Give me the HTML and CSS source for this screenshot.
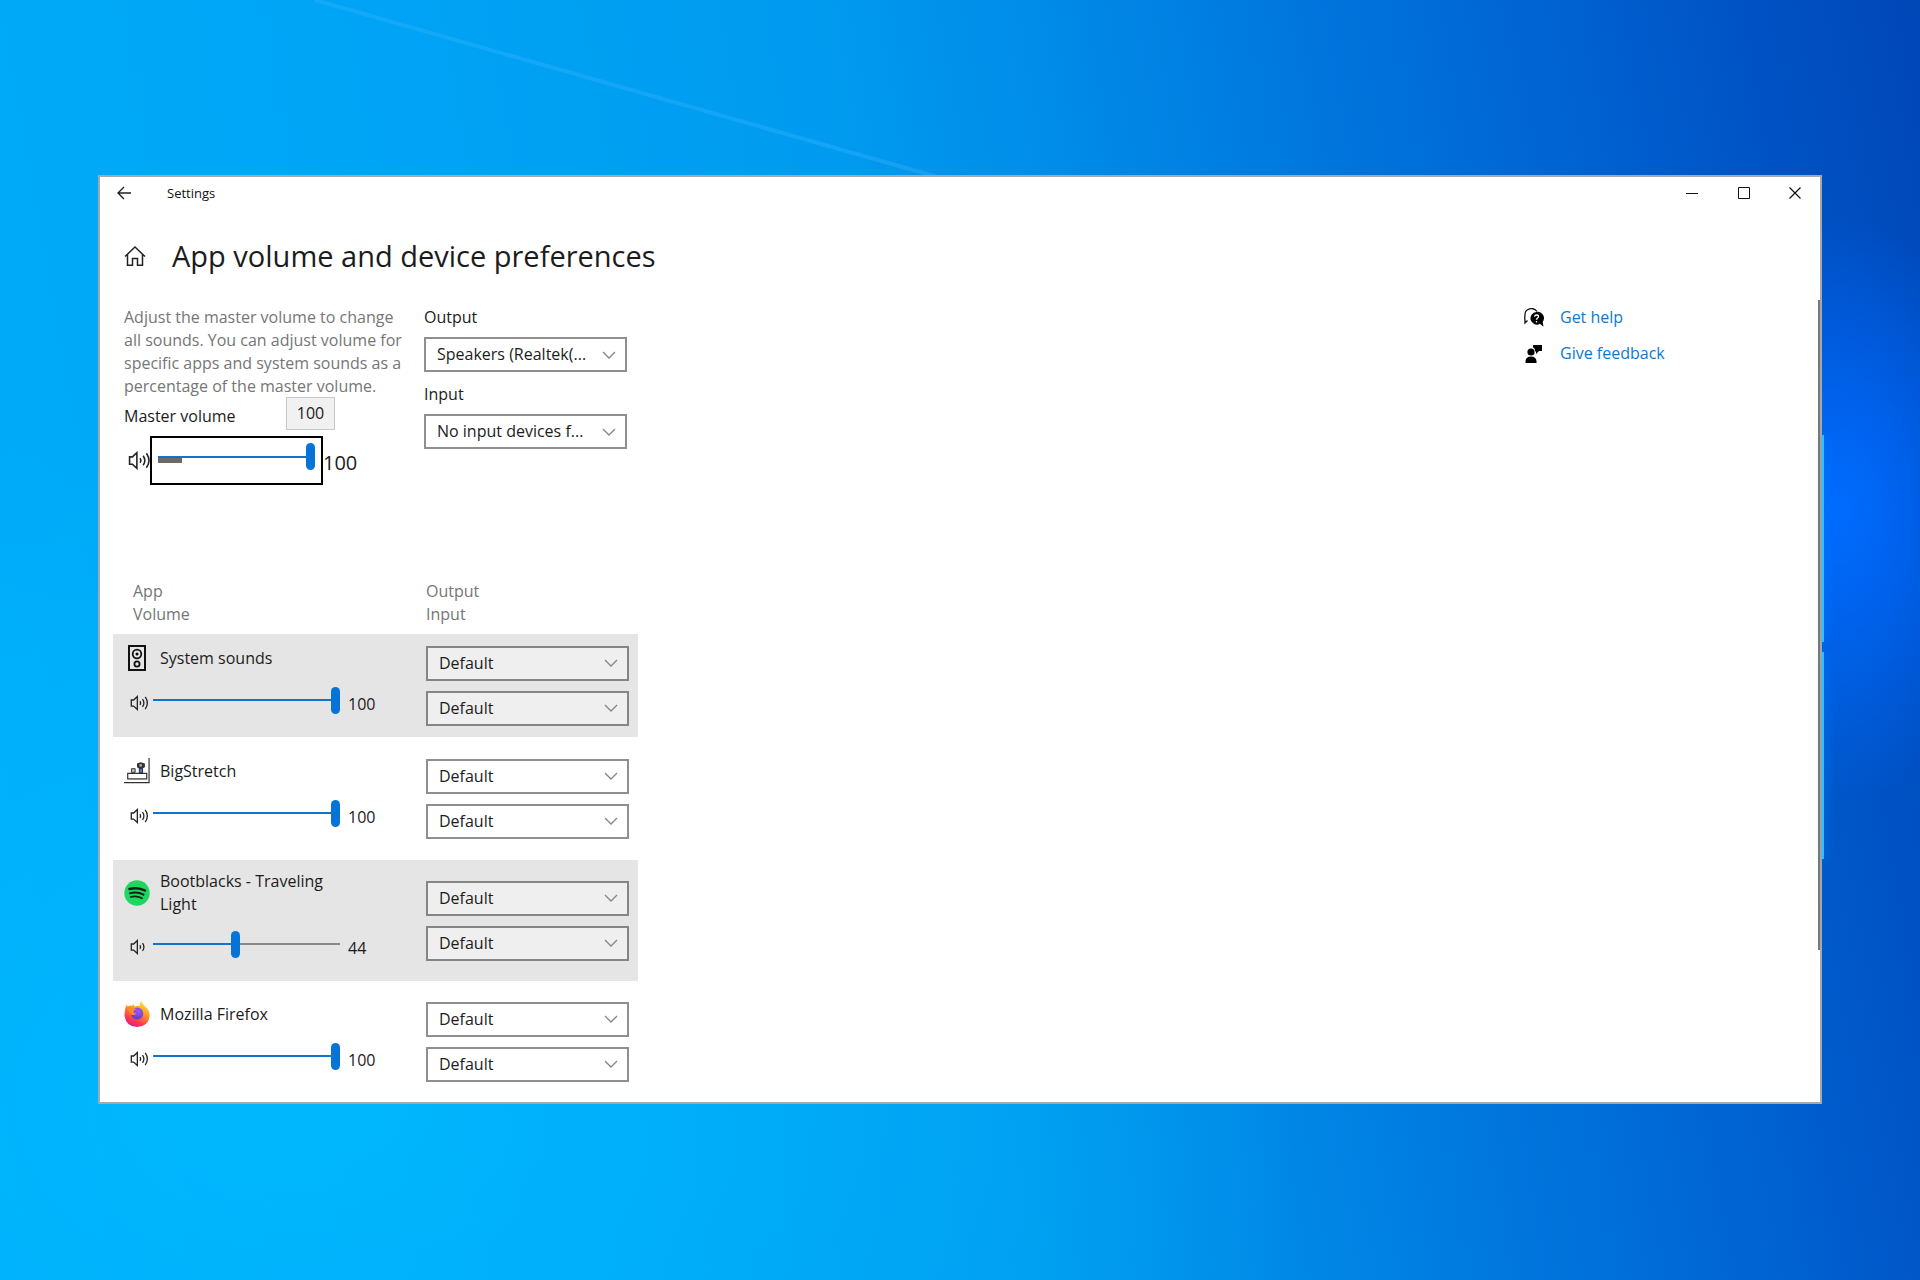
FILE: index.html
```html
<!DOCTYPE html>
<html lang="en">
<head>
<meta charset="utf-8">
<title>Settings</title>
<link rel="stylesheet" href="styles.css">
</head>
<body>
<svg class="defs" aria-hidden="true">
  <symbol id="chevron" viewBox="0 0 14 8"><path d="M1 1l6 6 6-6" fill="none" stroke="#858585" stroke-width="1.3"/></symbol>
  <symbol id="vol-high" viewBox="0 0 22 18"><g fill="none" stroke="#222" stroke-width="1.5"><path d="M1.500 5.500v7h2.700l4.300 4V1.500L4.200 5.500z"/><path d="M11.500 6.800q1.500 2.200 0 4.400M14.500 4.400q3.200 4.600 0 9.200M17.600 2q5 7 0 14"/></g></symbol>
  <symbol id="vol-mid" viewBox="0 0 22 18"><g fill="none" stroke="#222" stroke-width="1.5"><path d="M1.500 5.500v7h2.700l4.300 4V1.500L4.200 5.500z"/><path d="M11.500 6.800q1.500 2.200 0 4.400M14.500 4.400q3.200 4.600 0 9.200"/></g></symbol>
</svg>

<div class="wallpaper" aria-hidden="true">
  <svg class="beam" viewBox="0 0 1920 1280" preserveAspectRatio="none">
    <path d="M315 0L1180 246" stroke="#36b4ff" stroke-opacity=".35" stroke-width="4"/>
  </svg>
</div>

<main class="window">
  <i class="pane pane-top"></i><i class="pane pane-bottom"></i>
  <header class="titlebar">
    <button class="back" aria-label="Back"><svg width="14" height="14" viewBox="0 0 14 14"><path d="M14 7H1M7 1L1 7l6 6" fill="none" stroke="#222" stroke-width="1.400"/></svg></button>
    <span class="title">Settings</span>
    <button class="caption" aria-label="Minimize"><svg width="12" height="12" viewBox="0 0 12 12"><path d="M0 6.500h12" stroke="#111"/></svg></button>
    <button class="caption" aria-label="Maximize"><svg width="12" height="12" viewBox="0 0 12 12"><path d="M.5.5h11v11H.5z" fill="none" stroke="#111"/></svg></button>
    <button class="caption" aria-label="Close"><svg width="12" height="12" viewBox="0 0 12 12"><path d="M.5.5l11 11M11.500.5l-11 11" stroke="#111" stroke-width="1.200"/></svg></button>
  </header>

  <div class="heading">
    <svg width="22" height="22" viewBox="0 0 22 22"><path d="M1 11.500L11 2l10 9.500M3.500 9.500V20.300H8.500V13.500h5v6.800h5V9.500" fill="none" stroke="#222" stroke-width="1.500"/></svg>
    <h1>App volume and device preferences</h1>
  </div>

  <div class="content">
    <section class="master">
      <p>Adjust the master volume to change<br>all sounds. You can adjust volume for<br>specific apps and system sounds as a<br>percentage of the master volume.</p>
      <div class="master-label">
        <label for="master">Master volume</label>
        <output class="tip" for="master">100</output>
      </div>
      <div class="master-row">
        <svg width="23" height="19"><use href="#vol-high"/></svg>
        <div class="focus-box">
          <input id="master" class="slider" type="range" value="100" style="--value:100%">
          <div class="peak"></div>
        </div>
        <span class="big">100</span>
      </div>
    </section>

    <section class="devices">
      <label for="out">Output</label>
      <div class="combo"><select id="out"><option>Speakers (Realtek(...</option></select><svg><use href="#chevron"/></svg></div>
      <label for="in">Input</label>
      <div class="combo"><select id="in"><option>No input devices f...</option></select><svg><use href="#chevron"/></svg></div>
    </section>

    <nav class="links">
      <a href="#help"><svg width="20" height="20" viewBox="0 0 20 20"><path d="M3.500 12.500L1 15V12.500Q.5 10 1 7A6.500 6 0 0 1 13 3.500" fill="none" stroke="#111" stroke-width="1.300"/><path d="M12.500 4a6.300 6.300 0 1 0 3.500 11.700l3.500 3-.8-4.800A6.300 6.300 0 0 0 12.500 4z" fill="#000"/><path d="M10.500 8.700q.3-1.700 2-1.700 2 0 2 1.600c0 1.500-2 1.300-2 3.200M12.500 13v1.500" fill="none" stroke="#fff" stroke-width="1.300"/></svg><span>Get help</span></a>
      <a href="#feedback"><svg width="20" height="20" viewBox="0 0 20 20"><circle cx="7" cy="8" r="3.600"/><path d="M1.500 19v-2Q2 12.500 7 12.500t5.500 4.500v2zM9 1h9v6h-3l-3 3V7.500h-.8Q11 4 9 3.500z"/></svg><span>Give feedback</span></a>
    </nav>
  </div>

  <section class="apps">
    <div class="apps-head">
      <div>App<br>Volume</div>
      <div>Output<br>Input</div>
    </div>

    <article class="app shaded">
      <div class="app-main">
        <div class="name"><svg width="26" height="26" viewBox="0 0 26 26"><g fill="none" stroke="#111"><path d="M5 1h16v24H5z" stroke-width="2"/><circle cx="13" cy="9" r="4.300" stroke-width="1.800"/><circle cx="13" cy="19" r="2.600" stroke-width="1.800"/></g><circle cx="13" cy="9" r="1.500"/></svg><span id="n1">System sounds</span></div>
        <div class="level"><svg width="19" height="16"><use href="#vol-high"/></svg><input class="slider" type="range" value="100" aria-labelledby="n1" style="--value:100%"><span>100</span></div>
      </div>
      <div class="pick">
        <div class="combo"><select aria-label="Output"><option>Default</option></select><svg><use href="#chevron"/></svg></div>
        <div class="combo"><select aria-label="Input"><option>Default</option></select><svg><use href="#chevron"/></svg></div>
      </div>
    </article>

    <article class="app">
      <div class="app-main">
        <div class="name"><svg width="28" height="28" viewBox="0 0 28 28"><path d="M0 26.500h27V0" fill="none" stroke="#333" stroke-width="1.300"/><path d="M4 16.500h20.500v6H4z" fill="#fff" stroke="#333" stroke-width="1.300"/><path d="M8 11.500h4v4H8z" fill="#bbb" stroke="#333"/><path d="M16.500 11h3.500v5h-3.500z" fill="#5675d8" stroke="#222"/><path d="M14 6l4-1.500L22.500 6v4L18 12l-4-2z" fill="#333"/><circle cx="18" cy="8" r="1.500" fill="#aaa"/><path d="M6 22.500h16" stroke="#777"/></svg><span id="n2">BigStretch</span></div>
        <div class="level"><svg width="19" height="16"><use href="#vol-high"/></svg><input class="slider" type="range" value="100" aria-labelledby="n2" style="--value:100%"><span>100</span></div>
      </div>
      <div class="pick">
        <div class="combo"><select aria-label="Output"><option>Default</option></select><svg><use href="#chevron"/></svg></div>
        <div class="combo"><select aria-label="Input"><option>Default</option></select><svg><use href="#chevron"/></svg></div>
      </div>
    </article>

    <article class="app shaded">
      <div class="app-main">
        <div class="name"><svg width="26" height="26" viewBox="0 0 26 26"><circle cx="13" cy="13" r="12.700" fill="#1ed760"/><g fill="none" stroke="#0d2214" stroke-linecap="round"><path d="M5.500 9q8.500-2.300 15.500 1.500" stroke-width="2.500"/><path d="M6 13.200q7.500-2 13.500 1.400" stroke-width="2.100"/><path d="M6.700 17q6-1.600 11.300 1.300" stroke-width="1.700"/></g></svg><span id="n3">Bootblacks - Traveling Light</span></div>
        <div class="level"><svg width="19" height="16"><use href="#vol-mid"/></svg><input class="slider" type="range" value="44" aria-labelledby="n3" style="--value:44%"><span>44</span></div>
      </div>
      <div class="pick">
        <div class="combo"><select aria-label="Output"><option>Default</option></select><svg><use href="#chevron"/></svg></div>
        <div class="combo"><select aria-label="Input"><option>Default</option></select><svg><use href="#chevron"/></svg></div>
      </div>
    </article>

    <article class="app">
      <div class="app-main">
        <div class="name"><svg width="26" height="26" viewBox="0 0 26 26"><defs><linearGradient id="fire" x1=".8" y1="0" x2=".3" y2="1"><stop offset="0" stop-color="#fff04a"/><stop offset=".4" stop-color="#ff9a25"/><stop offset=".75" stop-color="#ff3c4e"/><stop offset="1" stop-color="#e5178c"/></linearGradient><radialGradient id="globe" cx=".6" cy=".3" r=".7"><stop offset="0" stop-color="#a456f0"/><stop offset="1" stop-color="#5a3fd0"/></radialGradient></defs><path d="M2.500 3.500Q3 5 4 5.500 6 4 8.500 4.500L9.500 3l1 2.500Q14 4.500 16 5q-1-3 1.500-5 .5 3 4 5.500 4.500 4 4.200 9.500Q24.500 25.500 13 26 1.500 25.500.5 14 .5 8 2.500 3.500z" fill="url(#fire)"/><circle cx="13.200" cy="12.500" r="6" fill="url(#globe)"/><path d="M4.500 7q3-1.200 5.500.5l2.500.3q-.5 1.300-2.500 1.700-1 1.500.2 2.500 1 .6 2 .2-1 2.300-4 1.800Q4.500 12 4.500 7z" fill="#ff8a2a"/></svg><span id="n4">Mozilla Firefox</span></div>
        <div class="level"><svg width="19" height="16"><use href="#vol-high"/></svg><input class="slider" type="range" value="100" aria-labelledby="n4" style="--value:100%"><span>100</span></div>
      </div>
      <div class="pick">
        <div class="combo"><select aria-label="Output"><option>Default</option></select><svg><use href="#chevron"/></svg></div>
        <div class="combo"><select aria-label="Input"><option>Default</option></select><svg><use href="#chevron"/></svg></div>
      </div>
    </article>
  </section>
  <i class="scrollbar"></i>
</main>
</body>
</html>
```
FILE: styles.css
```css
* { box-sizing: border-box; }

body {
  margin: 0;
  min-height: 100vh;
  padding: 175px 98px;
  font: 16px/23px "Open Sans", "Noto Sans", sans-serif;
  color: #1c1c1c;
  background: #0094f0;
}

h1, p { margin: 0; font-weight: 400; }
button { border: 0; padding: 0; background: none; }
svg { flex: none; display: block; }
.defs { position: absolute; width: 0; height: 0; }

.wallpaper {
  position: fixed;
  inset: 0;
  z-index: -1;
  background:
    radial-gradient(ellipse 180px 290px at 1840px 510px, #006cff 0%, rgba(0, 106, 255, .7) 35%, rgba(0, 90, 220, 0) 100%),
    radial-gradient(ellipse 1000px 700px at 300px 1100px, rgba(0, 190, 255, .7), rgba(0, 180, 255, 0)),
    linear-gradient(80deg, #00acfa 0%, #00a6f7 22%, #009bf0 48%, #008de9 58%, #0078de 70%, #0064d2 82%, #0052c4 92%, #0047b8 100%);
}
.beam { width: 100%; height: 100%; }

.window {
  position: relative;
  border: 2px solid #a3a9ad;
  background: #fff;
  padding-bottom: 9px;
}

.titlebar { display: flex; align-items: center; height: 32px; }
.back { margin: 0 36px 0 17px; }
.title { margin-right: auto; font-size: 13px; color: #111; }
.caption { width: 52px; height: 32px; display: grid; place-items: center; }
.caption:last-child { width: 50px; }

.heading { display: flex; align-items: center; gap: 26px; padding: 27px 24px 30px; }
.heading h1 { font-size: 29px; line-height: 40px; }

.content { display: flex; padding-left: 24px; }
.master { width: 300px; }
.master p { color: #767676; }
.master-label { display: flex; align-items: center; justify-content: space-between; padding-right: 89px; margin-top: -1px; }
.master-label label { padding-top: 5px; }
.tip {
  width: 49px;
  height: 33px;
  display: grid;
  place-items: center;
  border: 1px solid #c8c8c8;
  background: #f1f1f1;
}
.master-row { display: flex; align-items: center; margin-top: 6px; }
.focus-box { width: 173px; height: 49px; padding: 5px 6px; border: 2px solid #000; }
.master-row svg { margin-left: 4px; margin-right: -1px; }
.big { font-size: 20px; padding-top: 4px; }
.peak { width: 24px; height: 5px; margin-top: -12px; background: #6a6a6a; }

.slider {
  appearance: none;
  display: block;
  width: 100%;
  height: 27px;
  margin: 0;
  background: linear-gradient(90deg, #1273cf var(--value), #8a8a8a var(--value)) center / 100% 2px no-repeat;
}
.slider::-webkit-slider-thumb {
  appearance: none;
  width: 9px;
  height: 27px;
  border-radius: 5px;
  background: #0674d6;
}

.devices { width: 203px; }
.devices label { display: block; }
.devices .combo { margin: 8px 0 11px; }

.combo { display: grid; height: 35px; align-items: center; }
.combo > * { grid-area: 1 / 1; }
.combo select {
  appearance: none;
  width: 100%;
  height: 35px;
  padding: 0 11px;
  border: 2px solid #8f8f8f;
  border-radius: 0;
  background: #fff;
  color: #1c1c1c;
  font: inherit;
}
.combo svg { justify-self: end; margin-right: 11px; width: 14px; height: 8px; pointer-events: none; }

.links { margin-left: auto; width: 296px; display: grid; gap: 13px; align-content: start; }
.links a { display: flex; align-items: center; gap: 16px; color: #0c78d4; text-decoration: none; }

.apps { width: 525px; margin: 95px 0 0 13px; display: grid; gap: 9px; }
.apps-head { display: flex; color: #767676; margin-bottom: -1px; padding-left: 20px; }
.apps-head div:first-child { width: 293px; }
.app { display: flex; align-items: center; }
.app-main { width: 313px; padding: 10px 0 18px 11px; }
.name { display: flex; align-items: center; gap: 10px; min-height: 28px; padding-right: 100px; }
.name svg { width: 26px; }
.level { display: flex; align-items: center; height: 38px; margin-top: 9px; padding-left: 6px; }
.level .slider { width: 187px; margin: 0 8px 0 4px; }
.level svg { margin-top: 6px; }
.level span { margin-top: 8px; }
.pick { width: 203px; display: grid; gap: 10px; }
.app + .app { margin-top: 1px; }
.app:last-child { margin-top: 0; }
.shaded { background: #e5e5e5; }
.shaded select { background: #efefef; border-color: #858585; }

.scrollbar { position: absolute; right: 0; top: 123px; width: 2px; height: 650px; background: #777; }
.pane { position: absolute; right: -4px; width: 2px; height: 207px; background: #27c4ff; box-shadow: 2px 0 8px #0087ff; }
.pane-top { top: 258px; }
.pane-bottom { top: 475px; }
```
